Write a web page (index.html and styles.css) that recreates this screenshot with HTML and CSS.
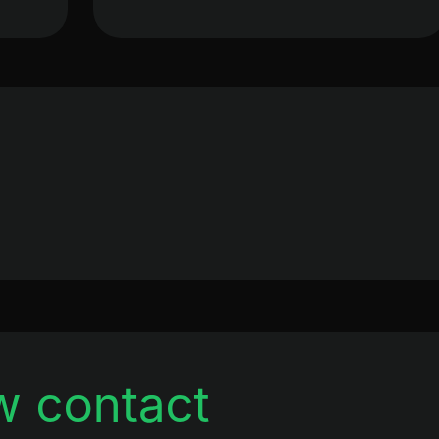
FILE: index.html
```html
<!DOCTYPE html>
<html lang="en">
<head>
<meta charset="utf-8">
<link rel="stylesheet" href="styles.css">
<title>New contact</title>
</head>
<body>
<div class="screen">
  <div class="top-row">
    <div class="tile tile-left"></div>
    <div class="tile tile-right"></div>
  </div>
  <div class="panel panel-mid"></div>
  <div class="panel panel-bottom">
    <div class="action">New contact</div>
  </div>
</div>
</body>
</html>
```

FILE: styles.css
```css
html, body {
  margin: 0;
  padding: 0;
  background: #0b0b0b;
  overflow: hidden;
}
.screen {
  width: 439px;
  height: 439px;
  display: flex;
  flex-direction: column;
  overflow: hidden;
}
.top-row {
  display: flex;
  gap: 25px;
  margin-left: -60px;
  margin-right: -8px;
  height: 38px;
  flex: none;
}
.tile {
  background: #181a1a;
  border-radius: 0 0 28px 28px;
  height: 38px;
}
.tile-left {
  width: 128px;
  flex: none;
}
.tile-right {
  flex: 1;
}
.panel {
  background: #181a1a;
  flex: none;
}
.panel-mid {
  margin-top: 49px;
  height: 193px;
}
.panel-bottom {
  margin-top: 52px;
  height: 120px;
}
.action {
  font-family: Inter, "Noto Sans", sans-serif;
  font-size: 49px;
  line-height: 1;
  color: #21c063;
  white-space: nowrap;
  margin-left: -83px;
  padding-top: 48px;
}
```
